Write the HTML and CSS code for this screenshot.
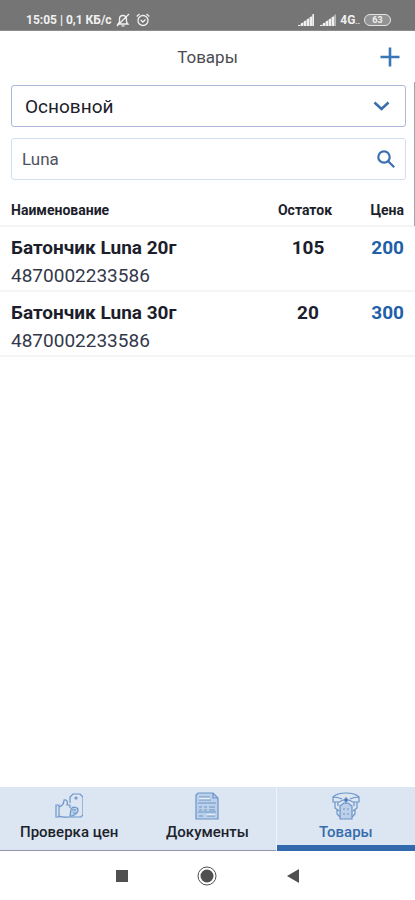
FILE: index.html
```html
<!DOCTYPE html>
<html lang="ru">
<head>
<meta charset="utf-8">
<meta name="viewport" content="width=device-width, initial-scale=1">
<title>Товары</title>
<link rel="stylesheet" href="styles.css">
</head>
<body>
<div class="status">
  <div class="status-group">
    <span>15:05 | 0,1 КБ/с</span>
    <svg class="status-icon" viewBox="0 0 14 14" aria-hidden="true"><path d="M2 11h10l-1.500-2V6c0-2-1.500-3.500-3.500-3.500S3.500 4 3.500 6v3L2 11zM5.500 12.800h3M1 13 13 1"/></svg>
    <svg class="status-icon alarm" viewBox="0 0 14 14" aria-hidden="true"><circle cx="7" cy="7.500" r="5"/><path d="M.7 3.500 3.500 1M13.300 3.500 10.500 1M4.700 7l2.200 2 2.600-2.500"/></svg>
  </div>
  <div class="status-group status-right">
    <svg class="signal" viewBox="0 0 16 12" aria-hidden="true"><path class="wedge" d="M0 12 16 0v12z"/><path d="M1 12v-1M4 12V9M7 12V7M10 12V5M13 12V3M15.500 12V0"/></svg>
    <svg class="signal" viewBox="0 0 16 12" aria-hidden="true"><path class="wedge" d="M0 12 16 0v12z"/><path d="M1 12v-1M4 12V9M7 12V7M10 12V5M13 12V3"/></svg>
    <span>4G<small>..</small></span>
    <span class="battery">63</span>
  </div>
</div>
<header class="topbar">
  <h1>Товары</h1>
  <button class="add" type="button" aria-label="Добавить"><svg viewBox="0 0 20 20"><path d="M10 .5v19M.5 10h19"/></svg></button>
</header>
<main class="content">
  <div class="filters">
    <div class="field field-select">
      <select aria-label="Склад"><option>Основной</option></select>
      <svg class="chevron" viewBox="0 0 16 10" aria-hidden="true"><path d="m1 1.500 7 6.500 7-6.500"/></svg>
    </div>
    <div class="field field-search">
      <input type="text" value="Luna" aria-label="Поиск">
      <button type="button" aria-label="Найти"><svg viewBox="0 0 18 18"><circle cx="7" cy="7" r="5.700"/><path d="m11.200 11.200 6 6"/></svg></button>
    </div>
  </div>
  <table class="goods">
    <thead><tr><th>Наименование</th><th class="stock">Остаток</th><th class="price">Цена</th></tr></thead>
    <tbody>
      <tr><td><div class="name">Батончик Luna 20г</div><div class="code">4870002233586</div></td><td class="stock">105</td><td class="price">200</td></tr>
      <tr><td><div class="name">Батончик Luna 30г</div><div class="code">4870002233586</div></td><td class="stock">20</td><td class="price">300</td></tr>
    </tbody>
  </table>
</main>
<nav class="tabs">
  <a href="#check">
    <svg viewBox="0 0 28 28" aria-hidden="true"><path d="M1 13h3v12H1zM4 15c3-1 5-4 5-7 3-1 4 2 3 5h3v3M4 24c3 2 7 1 11 1M15 11V5l3-3h7l3 3v18l-2 2H15"/><circle cx="21" cy="6" r="1"/><path class="tint" d="M16 17c2-3 7-2 7 1s-3 5-6 6h-2z"/><path d="M17 18h4M18 21h3"/></svg>
    <span>Проверка цен</span>
  </a>
  <a href="#documents">
    <svg viewBox="0 0 28 28" aria-hidden="true"><path class="tint" d="M5 1h15l5 5v21H3V3z"/><path class="paper" d="M6 5h11v3H6zM14 22h8v2h-8z"/><path d="M20 1v5h5M6 5h11M6 8h12M5 11h18M6 15h3m2 0h3m2 0h6M6 18h3m2 0h3m2 0h6M5 20h18M6 24h4m4 0h8"/></svg>
    <span>Документы</span>
  </a>
  <a class="active" href="#goods" aria-current="page">
    <svg viewBox="0 0 28 28" aria-hidden="true"><path d="M1 5c3-3 7-4 13-4s10 1 13 4v5h-6L14 7l-7 3H1zM1 5c4 0 7 1 9 2M27 5c-4 0-7 1-9 2M3 10v6l4 3M25 10v6l-4 3M6 10v4M22 10v4M5 18v4l3 3M23 18v4l-3 3"/><path class="tint" d="m8 14 4-3h4l4 3v13H8z"/><path d="M14 5v7M11 17h2m2 0h2M11 22h2m2 0h2"/><circle class="dot" cx="14" cy="8" r="1.500"/></svg>
    <span>Товары</span>
  </a>
</nav>
<div class="system">
  <button type="button" aria-label="Недавние"><svg viewBox="0 0 20 20"><path d="M4 4h12v12H4z"/></svg></button>
  <button type="button" aria-label="Домой"><svg viewBox="0 0 20 20"><circle cx="10" cy="10" r="6.500"/><circle class="ring" cx="10" cy="10" r="9"/></svg></button>
  <button type="button" aria-label="Назад"><svg viewBox="0 0 20 20"><path d="M4 10 16 3v14z"/></svg></button>
</div>
</body>
</html>
```
FILE: styles.css
```css
* { box-sizing: border-box; }
body {
  margin: 0;
  min-height: 100vh;
  display: flex;
  flex-direction: column;
  background: #fff;
  color: #1c1e2b;
  font-family: Roboto, "Liberation Sans", sans-serif;
}
button { padding: 0; border: 0; background: none; display: flex; color: inherit; }
svg { display: block; fill: none; stroke: currentColor; }

.status {
  height: 31px;
  padding: 9px 24px 0 26px;
  display: flex;
  justify-content: space-between;
  background: #757575;
  border-bottom: 1px solid #8c8c8c;
  color: #f0f0f0;
  font-size: 12px;
  font-weight: 700;
}
.status-group { display: flex; align-items: center; gap: 4px; }
.status-icon { width: 14px; height: 14px; stroke-width: 1.3; }
.alarm { margin-left: 2px; }
.signal { width: 16px; height: 12px; stroke-width: 2; }
.signal .wedge { fill: #b5b5b5; stroke: none; }
.signal + .signal { margin-left: 2px; }
.status small { font-size: 8px; }
.battery {
  width: 27px;
  height: 12px;
  border: 1px solid #e4e4e4;
  border-radius: 6px;
  background: #929292;
  font-size: 9px;
  line-height: 10px;
  text-align: center;
}

.topbar {
  height: 51px;
  padding: 0 15px;
  display: grid;
  grid-template-columns: 20px 1fr 20px;
  align-items: center;
}
.topbar h1 {
  grid-column: 2;
  margin: 0;
  font-size: 17px;
  font-weight: 400;
  text-align: center;
  color: #4a4b52;
}
.add { color: #3a76b5; }
.add svg { width: 20px; height: 20px; stroke-width: 2.6; }

.content { flex: 1; position: relative; }
.content::after {
  content: "";
  position: absolute;
  top: 0;
  right: 0;
  width: 1px;
  height: 144px;
  background: #a6a6a6;
}
.filters {
  padding: 3px 9px 0 11px;
  display: flex;
  flex-direction: column;
  gap: 11px;
}
.field {
  height: 42px;
  display: flex;
  align-items: center;
  border: 1px solid #cfe0f2;
  border-radius: 3px;
  color: #3a70b0;
}
.field select, .field input {
  flex: 1;
  min-width: 0;
  height: 100%;
  padding: 0;
  border: 0;
  outline: 0;
  background: none;
  appearance: none;
  font-family: inherit;
}
.field-select { padding: 0 15px 0 13px; border-color: #a9b9d6; }
.field-select select { font-size: 19px; color: #20212a; }
.chevron { width: 17px; height: 10px; margin-left: -17px; stroke-width: 2.6; pointer-events: none; }
.field-search { padding: 0 10px; }
.field-search input { font-size: 17px; color: #50525e; }
.field-search svg { width: 18px; height: 18px; stroke-width: 2.2; }

.goods { width: 100%; border-collapse: collapse; table-layout: fixed; }
.goods th, .goods td { padding: 0; text-align: left; vertical-align: top; }
.goods th:first-child, .goods td:first-child { padding-left: 11px; }
.goods th { height: 46px; padding-top: 21px; font-size: 14px; line-height: 18px; font-weight: 700; }
.goods tr { border-bottom: 2px solid #f5f5f6; }
.goods td { height: 65px; padding-top: 7px; font-size: 19px; line-height: 28px; font-weight: 700; }
.goods .stock { width: 86px; text-align: center; }
.goods th.stock { padding-right: 6px; }
.goods .price { width: 64px; padding-right: 11px; text-align: right; }
.goods td.price { color: #215fa8; }
.goods .code { font-weight: 400; color: #34384a; }

.tabs {
  height: 64px;
  display: grid;
  grid-template-columns: repeat(3, 1fr);
  background: #dbe6f2;
}
.tabs a {
  padding-top: 5px;
  display: flex;
  flex-direction: column;
  align-items: center;
  gap: 2px;
  border-bottom: 1px solid #8e95a8;
  color: #20222b;
  font-size: 15px;
  line-height: 20px;
  font-weight: 500;
  text-decoration: none;
}
.tabs svg { width: 28px; height: 28px; color: #6b93c8; stroke-width: 1.2; }
.tabs .tint { fill: #bdd0e9; }
.tabs .paper { fill: #e6eef8; stroke: none; }
.tabs .dot { fill: #2f69b0; }
.tabs .active { border-bottom: 6px solid #3268ac; box-shadow: -1px 0 #edf3fa; color: #376cad; }

.system {
  height: 49px;
  padding: 0 79px;
  display: flex;
  align-items: center;
  justify-content: space-around;
}
.system button { color: #505050; }
.system svg { width: 20px; height: 20px; fill: currentColor; stroke: none; }
.system .ring { fill: none; stroke: currentColor; }
```
